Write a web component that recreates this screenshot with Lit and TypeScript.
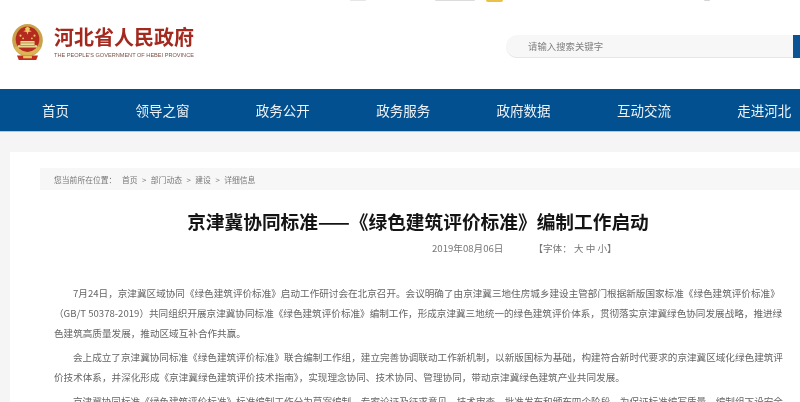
import { LitElement, html, css, svg } from "lit";
import { customElement } from "lit/decorators.js";

const NAV = ["首页", "领导之窗", "政务公开", "政务服务", "政府数据", "互动交流", "走进河北"];
const CRUMBS = ["首页", "部门动态", "建设", "详细信息"];
const PARAS = [
  [
    "7月24日，京津冀区域协同《绿色建筑评价标准》启动工作研讨会在北京召开。会议明确了由京津冀三地住房城乡建设主管部门根据新版国家标准《绿色建筑评价标准》",
    "（GB/T 50378-2019）共同组织开展京津冀协同标准《绿色建筑评价标准》编制工作，形成京津冀三地统一的绿色建筑评价体系，贯彻落实京津冀绿色协同发展战略，推进绿",
    "色建筑高质量发展，推动区域互补合作共赢。",
  ],
  [
    "会上成立了京津冀协同标准《绿色建筑评价标准》联合编制工作组，建立完善协调联动工作新机制，以新版国标为基础，构建符合新时代要求的京津冀区域化绿色建筑评",
    "价技术体系，并深化形成《京津冀绿色建筑评价技术指南》，实现理念协同、技术协同、管理协同，带动京津冀绿色建筑产业共同发展。",
  ],
  ["京津冀协同标准《绿色建筑评价标准》标准编制工作分为草案编制、专家论证及征求意见、技术审查、批准发布和颁布四个阶段，为保证标准编写质量，编制组下设安全"],
];
const STUBS = [
  { x: 350, w: 16, h: 1, c: "#e6e6e6" },
  { x: 435, w: 40, h: 1, c: "#dcdcdc" },
  { x: 486, w: 17, h: 2, c: "#e8c04a" },
  { x: 704, w: 6, h: 1, c: "#d4d4d4" },
];

const emblem = svg`<svg class="emblem" viewBox="0 0 40 42" width="35" height="38" preserveAspectRatio="none" aria-hidden="true">
  <ellipse cx="20" cy="19" rx="17.5" ry="18" fill="#c9a24a"/>
  <ellipse cx="20" cy="18" rx="13.5" ry="14" fill="#b52a1f"/>
  <path d="M17 6l3-2 3 2-1 2 3 1-4 1-1 3-1-3-4-1 3-1z" fill="#e8c860"/>
  <circle cx="12" cy="14" r="1.2" fill="#e8c860"/><circle cx="28" cy="14" r="1.2" fill="#e8c860"/>
  <circle cx="15" cy="17" r="1" fill="#e8c860"/><circle cx="25" cy="17" r="1" fill="#e8c860"/>
  <path d="M9 27h22v-2l-3-1v-4H12v4l-3 1z" fill="#f0dc9a"/>
  <path d="M12 22h16M11 25h18" stroke="#b58a36" stroke-width="1"/>
  <path d="M5 27c3 6 9 9 15 9s12-3 15-9l-3-1c-3 4-7 6-12 6s-9-2-12-6z" fill="#dcb556"/>
  <path d="M8 36h24l-2 5H10z" fill="#c22c20"/>
  <rect x="15" y="36" width="10" height="3" fill="#e8c860"/>
</svg>`;

@customElement("app-root")
export class AppRoot extends LitElement {
  static styles = css`
    :host {
      display: block;
      width: 800px;
      height: 402px;
      overflow: hidden;
      position: relative;
      background: #f5f5f6;
      font-family: "Noto Sans CJK SC", "Liberation Sans", sans-serif;
      filter: blur(0.3px);
    }
    header {
      height: 89px;
      background: #fff;
      display: flex;
      align-items: flex-start;
      position: relative;
    }
    .stub { position: absolute; top: 0; border-radius: 0 0 2px 2px; }
    .brand {
      display: flex;
      gap: 9px;
      align-items: flex-start;
      margin: 23px 0 0 10px;
      width: 496px;
      flex: none;
      box-sizing: border-box;
    }
    .emblem { flex: none; }
    .brand-text { display: flex; flex-direction: column; margin-top: 1px; }
    .brand-cn {
      font-size: 20px;
      line-height: 26px;
      font-weight: 700;
      color: #a3281e;
      white-space: nowrap;
    }
    .brand-en {
      font-family: "Liberation Sans", sans-serif;
      font-size: 5.6px;
      line-height: 10px;
      color: #7a5048;
      white-space: nowrap;
    }
    .search {
      display: flex;
      margin-top: 35px;
      height: 23px;
      width: 294px;
      flex: none;
    }
    .search-box {
      flex: 1;
      box-sizing: border-box;
      background: #f7f7f7;
      border-radius: 12px 0 0 12px;
      border-bottom: 1px solid #e6e6e6;
      padding-left: 22px;
      font-size: 9.4px;
      line-height: 22px;
      color: #808080;
    }
    .search-btn { width: 7px; background: #0b5394; }
    nav {
      height: 42px;
      background: #02508f;
      border-bottom: 1px solid #a9cbe6;
      display: flex;
      gap: 66.4px;
      padding-left: 42px;
      align-items: center;
    }
    nav span {
      font-size: 13.5px;
      color: #eef3f8;
      white-space: nowrap;
    }
    .card {
      background: #fff;
      margin: 20px 0 0 10px;
      height: 260px;
      padding: 16px 0 0 30px;
      box-sizing: border-box;
    }
    .crumbs {
      height: 22px;
      background: #f7f7f7;
      display: flex;
      align-items: center;
      padding-left: 14px;
      font-size: 7.8px;
      color: #777;
      gap: 4.5px;
      white-space: nowrap;
    }
    .crumbs .here { margin-right: 1px; }
    h1 {
      margin: 18px 4px 0 0;
      text-align: center;
      font-size: 18.7px;
      line-height: 26px;
      font-weight: 700;
      color: #141414;
      white-space: nowrap;
    }
    .meta {
      display: flex;
      gap: 30px;
      margin: 7px 0 0 392px;
      font-size: 9.6px;
      line-height: 14px;
      color: #777;
      white-space: nowrap;
    }
    .article { margin: 28px 0 0 14px; width: 745px; }
    .article p { margin: 0 0 4px; }
    .line {
      display: block;
      font-size: 9.6px;
      line-height: 20px;
      color: #666;
      white-space: nowrap;
    }
    .line.first { padding-left: 19px; }
  `;

  render() {
    return html`
      <header>
        ${STUBS.map((s) => html`<i class="stub" style="left:${s.x}px;width:${s.w}px;height:${s.h}px;background:${s.c}"></i>`)}
        <div class="brand">
          ${emblem}
          <div class="brand-text">
            <div class="brand-cn">河北省人民政府</div>
            <div class="brand-en">THE PEOPLE'S GOVERNMENT OF HEBEI PROVINCE</div>
          </div>
        </div>
        <div class="search">
          <div class="search-box">请输入搜索关键字</div>
          <div class="search-btn"></div>
        </div>
      </header>
      <nav>${NAV.map((n) => html`<span>${n}</span>`)}</nav>
      <main class="card">
        <div class="crumbs">
          <span class="here">您当前所在位置：</span>
          ${CRUMBS.map((c, i) => html`${i ? html`<span>&gt;</span>` : ""}<span>${c}</span>`)}
        </div>
        <h1>京津冀协同标准——《绿色建筑评价标准》编制工作启动</h1>
        <div class="meta"><span>2019年08月06日</span><span>【字体： 大 中 小】</span></div>
        <div class="article">
          ${PARAS.map(
            (p) => html`<p>${p.map((l, i) => html`<span class="line ${i === 0 ? "first" : ""}">${l}</span>`)}</p>`
          )}
        </div>
      </main>
    `;
  }
}
